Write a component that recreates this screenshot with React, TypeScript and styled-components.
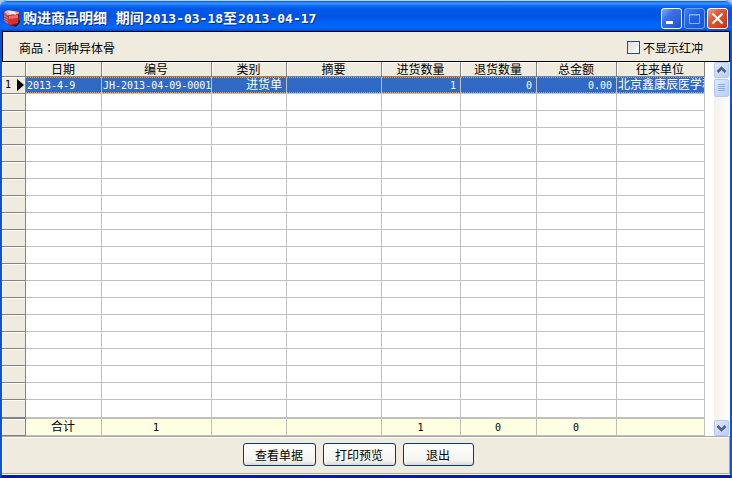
import React from "react";
import styled, { createGlobalStyle, css } from "styled-components";

const GlobalStyle = createGlobalStyle`
  * { box-sizing: border-box; }
  html, body { margin: 0; background: #a9c6ea; }
  body, button, input, label {
    font-family: "Noto Sans CJK SC", sans-serif;
    font-size: 12px;
    color: #000;
  }
`;

const face = "#efebde";
const line = "#c0c0c0";
const dark = "#848284";

const Window = styled.main`
  display: flex;
  flex-direction: column;
  min-height: 100vh;
  background: linear-gradient(#0a5cf0 0, #0a5cf0 97%, #0831d9 100%);
  border: solid #0855dd;
  border-width: 0 2px 4px;
  border-bottom-color: #0018b4;
  border-radius: 7px 7px 0 0;
`;

const TitleBar = styled.header`
  display: flex;
  align-items: center;
  gap: 3px;
  height: 31px;
  margin: 0 -2px;
  padding: 4px 4px 0 3px;
  border-top: 1px solid #b4d0f4;
  border-radius: 7px 7px 0 0;
  background: linear-gradient(#0a5ae4 0, #3c95ff 8%, #1470f8 14%, #0058e6 26%, #0054e3 50%, #0062f8 76%, #0068ff 90%, #0048d0 100%);
`;

const Title = styled.h1`
  flex: 1;
  margin: 0;
  padding-bottom: 2px;
  font-size: 14px;
  line-height: 20px;
  font-weight: 700;
  white-space: pre;
  color: #fff;
  text-shadow: 1px 1px #0a2a90;
`;

const TitleDigits = styled.span`
  margin-left: 1px;
  font-family: "DejaVu Sans Mono", monospace;
  font-size: 13px;
  line-height: 0;
`;

const CaptionButtons = styled.div`
  display: flex;
  gap: 2px;
`;

const CaptionButton = styled.button<{ $kind: "plain" | "dim" | "close" }>`
  width: 21px;
  height: 21px;
  padding: 0;
  border: 1px solid ${(p) => (p.$kind === "dim" ? "#7aa2f0" : "#fff")};
  border-radius: 3px;
  background: ${(p) =>
    p.$kind === "close"
      ? "linear-gradient(135deg, #f0a088 0, #e25a34 35%, #d8401a 75%, #b83010 100%)"
      : p.$kind === "dim"
        ? "linear-gradient(135deg, #3f7cf0 0, #1f5fe6 50%, #1a56dc 100%)"
        : "linear-gradient(135deg, #8aaaf4 0, #3c70ea 35%, #2a5ee0 75%, #1c48c0 100%)"};
  svg { display: block; }
`;

const FilterBar = styled.section`
  display: flex;
  align-items: center;
  justify-content: space-between;
  height: 31px;
  padding: 1px 26px 0 16px;
  border: 1px solid #000;
  background: ${face};
`;

const CenteredColon = styled.span`
  font-family: "Noto Sans CJK TC", sans-serif;
`;

const CheckLabel = styled.label`
  display: flex;
  align-items: center;
  gap: 3px;
`;

const CheckBox = styled.input`
  appearance: none;
  width: 13px;
  height: 13px;
  margin: 0;
  border: 1px solid #1c5180;
  background: linear-gradient(135deg, #dcdcd7, #fff);
  &:checked { background: #21a121; }
`;

const GridArea = styled.section`
  display: flex;
  flex: 1;
  background: #fff;
`;

const TableWrap = styled.div`
  flex: 1;
  min-width: 0;
  margin-right: 9px;
`;

const Grid = styled.table`
  width: 100%;
  table-layout: fixed;
  border-collapse: separate;
  border-spacing: 0;
  line-height: 16px;
`;

const Col = styled.col<{ $w?: number }>`
  width: ${(p) => (p.$w ? `${p.$w}px` : "auto")};
`;

const raised = css`
  background: ${face};
  box-shadow: inset 1px 1px #fff;
`;

const HeadCell = styled.th`
  ${raised}
  height: 15px;
  padding: 0 1px 0 0;
  line-height: 14px;
  font-weight: 400;
  white-space: nowrap;
  border-right: 1px solid ${dark};
  border-bottom: 1px solid ${dark};
`;

const RowHead = styled.th<{ $last?: boolean }>`
  ${raised}
  height: ${(p) => (p.$last ? 19 : 17)}px;
  padding: 0 1px 0 3px;
  font-weight: 400;
  border-right: 1px solid ${dark};
  border-bottom: ${(p) => (p.$last ? 2 : 1)}px solid ${dark};
`;

const RowMark = styled.div`
  display: flex;
  align-items: center;
  justify-content: space-between;
  height: 16px;
`;

const Cell = styled.td<{ $align?: string; $selected?: boolean; $last?: boolean }>`
  padding: 0 ${(p) => (p.$align ? 4 : 0)}px 0 1px;
  text-align: ${(p) => p.$align ?? "left"};
  white-space: nowrap;
  border-right: 1px solid ${line};
  border-bottom: ${(p) => (p.$last ? 2 : 1)}px solid ${line};
  &:last-child { overflow: hidden; }
  ${(p) =>
    p.$selected &&
    css`
      vertical-align: top;
      color: #fff;
      line-height: 14px;
      background:
        repeating-linear-gradient(90deg, #e0a050 0 1px, #316ac5 1px 2px) top / 100% 1px no-repeat,
        repeating-linear-gradient(90deg, #e0a050 0 1px, #316ac5 1px 2px) bottom / 100% 1px no-repeat,
        #316ac5;
      background-clip: padding-box;
    `}
`;

const TotalCell = styled.td`
  height: 17px;
  padding: 0 1px 0 0;
  line-height: 14px;
  vertical-align: top;
  text-align: center;
  background: #ffffe1;
  border-right: 1px solid ${line};
  border-bottom: 1px solid ${line};
`;

const Latin = styled.span`
  font-family: "DejaVu Sans Mono", monospace;
  font-size: 10px;
  line-height: 0;
`;

const ScrollBar = styled.div`
  display: flex;
  flex-direction: column;
  width: 16px;
  padding-right: 1px;
  background: linear-gradient(90deg, #f3f1ec, #fefefb);
`;

const ScrollButton = styled.button<{ $height: number }>`
  display: flex;
  align-items: center;
  justify-content: center;
  width: 15px;
  height: ${(p) => p.$height}px;
  padding: 0;
  border: 1px solid #b4c8f6;
  border-radius: 2px;
  background: linear-gradient(135deg, #dfe9ff, #b9cdfb);
`;

const ScrollTrack = styled.div`
  flex: 1;
  padding-top: 1px;
`;

const Footer = styled.footer`
  display: flex;
  align-items: center;
  justify-content: center;
  gap: 7px;
  height: 38px;
  padding: 0 15px 1px 0;
  border: solid #aca899;
  border-width: 1px 1px 1px 0;
  box-shadow: inset 1px 1px #fff, 0 1px #fff;
  background: ${face};
`;

const PushButton = styled.button<{ $width: number }>`
  width: ${(p) => p.$width}px;
  height: 23px;
  padding: 0;
  line-height: 20px;
  border: 1px solid #003c74;
  border-radius: 3px;
  background: linear-gradient(#fff, #f4f3ee 80%, #dcd8cc);
`;

const BoxIcon = () => (
  <svg width="17" height="18" viewBox="0 0 17 18" aria-hidden="true">
    <path d="M1 3 5 1l11 2v11l-2 3H8L1 12z" fill="#8a1418" />
    <path d="M1 3 5 1l11 2-1 3-10 1z" fill="#e8b0a8" />
    <path d="M4 3l3-1 6 1-2 1.500z" fill="#f4f4f4" />
    <path d="M1 4 5 6v9l-4-3z" fill="#9a8c90" />
    <path d="M1 5.500l4 2M1 8l4 2M1 10.500l4 2" stroke="#c82428" />
    <path d="M5 6l10-1v9l-8 2-2-1z" fill="#dc2c2c" />
    <path d="M6 7l9-1v3l-9 1z" fill="#f06c68" />
    <path d="M7 6V4h5v2" fill="none" stroke="#fff" />
    <path d="M16 11v3l-3 3h-2" fill="none" stroke="#101010" />
  </svg>
);

const Chevron = ({ down = false }: { down?: boolean }) => (
  <svg width="11" height="8" viewBox="0 0 11 8" aria-hidden="true">
    <path d={down ? "M1.500 2 5.500 6 9.500 2" : "M1.500 6 5.500 2 9.500 6"} fill="none" stroke="#4d6185" strokeWidth="2.600" />
  </svg>
);

const columns: { title: string; width?: number; align?: string }[] = [
  { title: "日期", width: 76 },
  { title: "编号", width: 110 },
  { title: "类别", width: 75, align: "right" },
  { title: "摘要", width: 95 },
  { title: "进货数量", width: 79, align: "right" },
  { title: "退货数量", width: 76, align: "right" },
  { title: "总金额", width: 80, align: "right" },
  { title: "往来单位" },
];
const record = ["2013-4-9", "JH-2013-04-09-0001", "进货单", "", "1", "0", "0.00", "北京鑫康辰医学科技"];
const totals = ["合计", "1", "", "", "1", "0", "0", ""];
const emptyRows = Array.from({ length: 19 }, (_, i) => i);

const Value = ({ text }: { text: string }) => (/^[\x20-\x7e]+$/.test(text) ? <Latin>{text}</Latin> : <>{text}</>);

export default function App() {
  return (
    <>
      <GlobalStyle />
      <Window>
        <TitleBar>
          <BoxIcon />
          <Title>
            购进商品明细<TitleDigits> </TitleDigits>期间<TitleDigits>2013-03-18</TitleDigits>至<TitleDigits>2013-04-17</TitleDigits>
          </Title>
          <CaptionButtons>
            <CaptionButton $kind="plain" aria-label="最小化">
              <svg width="19" height="19"><path d="M4 12h7v3H4z" fill="#fff" /></svg>
            </CaptionButton>
            <CaptionButton $kind="dim" aria-label="最大化" disabled>
              <svg width="19" height="19"><path d="M4.500 5.500h10v9h-10zM4 6h11" fill="none" stroke="#8fb0f4" /></svg>
            </CaptionButton>
            <CaptionButton $kind="close" aria-label="关闭">
              <svg width="19" height="19"><path d="M4.500 4.500l10 10M14.500 4.500l-10 10" stroke="#fff" strokeWidth="2.200" /></svg>
            </CaptionButton>
          </CaptionButtons>
        </TitleBar>
        <FilterBar>
          <span>商品<CenteredColon lang="zh-TW">：</CenteredColon>同种异体骨</span>
          <CheckLabel>
            <CheckBox type="checkbox" />
            不显示红冲
          </CheckLabel>
        </FilterBar>
        <GridArea>
          <TableWrap>
            <Grid>
              <colgroup>
                <Col $w={24} />
                {columns.map((c) => <Col key={c.title} $w={c.width} />)}
              </colgroup>
              <thead>
                <tr>
                  <HeadCell />
                  {columns.map((c) => <HeadCell key={c.title} scope="col">{c.title}</HeadCell>)}
                </tr>
              </thead>
              <tbody>
                <tr>
                  <RowHead scope="row">
                    <RowMark>
                      <Latin>1</Latin>
                      <svg width="7" height="12" aria-hidden="true"><path d="M0 0l7 6-7 6z" /></svg>
                    </RowMark>
                  </RowHead>
                  {columns.map((c, i) => (
                    <Cell key={c.title} $align={c.align} $selected><Value text={record[i]} /></Cell>
                  ))}
                </tr>
                {emptyRows.map((r) => (
                  <tr key={r}>
                    <RowHead $last={r === 18} />
                    {columns.map((c) => <Cell key={c.title} $last={r === 18} />)}
                  </tr>
                ))}
              </tbody>
              <tfoot>
                <tr>
                  <RowHead />
                  {columns.map((c, i) => <TotalCell key={c.title}><Value text={totals[i]} /></TotalCell>)}
                </tr>
              </tfoot>
            </Grid>
          </TableWrap>
          <ScrollBar>
            <ScrollButton $height={16} aria-label="向上"><Chevron /></ScrollButton>
            <ScrollTrack>
              <ScrollButton $height={18} aria-label="滚动">
                <svg width="7" height="8" aria-hidden="true"><path d="M0 .5h7M0 2.500h7M0 4.500h7M0 6.500h7" stroke="#8caef0" /></svg>
              </ScrollButton>
            </ScrollTrack>
            <ScrollButton $height={16} aria-label="向下"><Chevron down /></ScrollButton>
          </ScrollBar>
        </GridArea>
        <Footer>
          <PushButton $width={73}>查看单据</PushButton>
          <PushButton $width={73}>打印预览</PushButton>
          <PushButton $width={71}>退出</PushButton>
        </Footer>
      </Window>
    </>
  );
}
